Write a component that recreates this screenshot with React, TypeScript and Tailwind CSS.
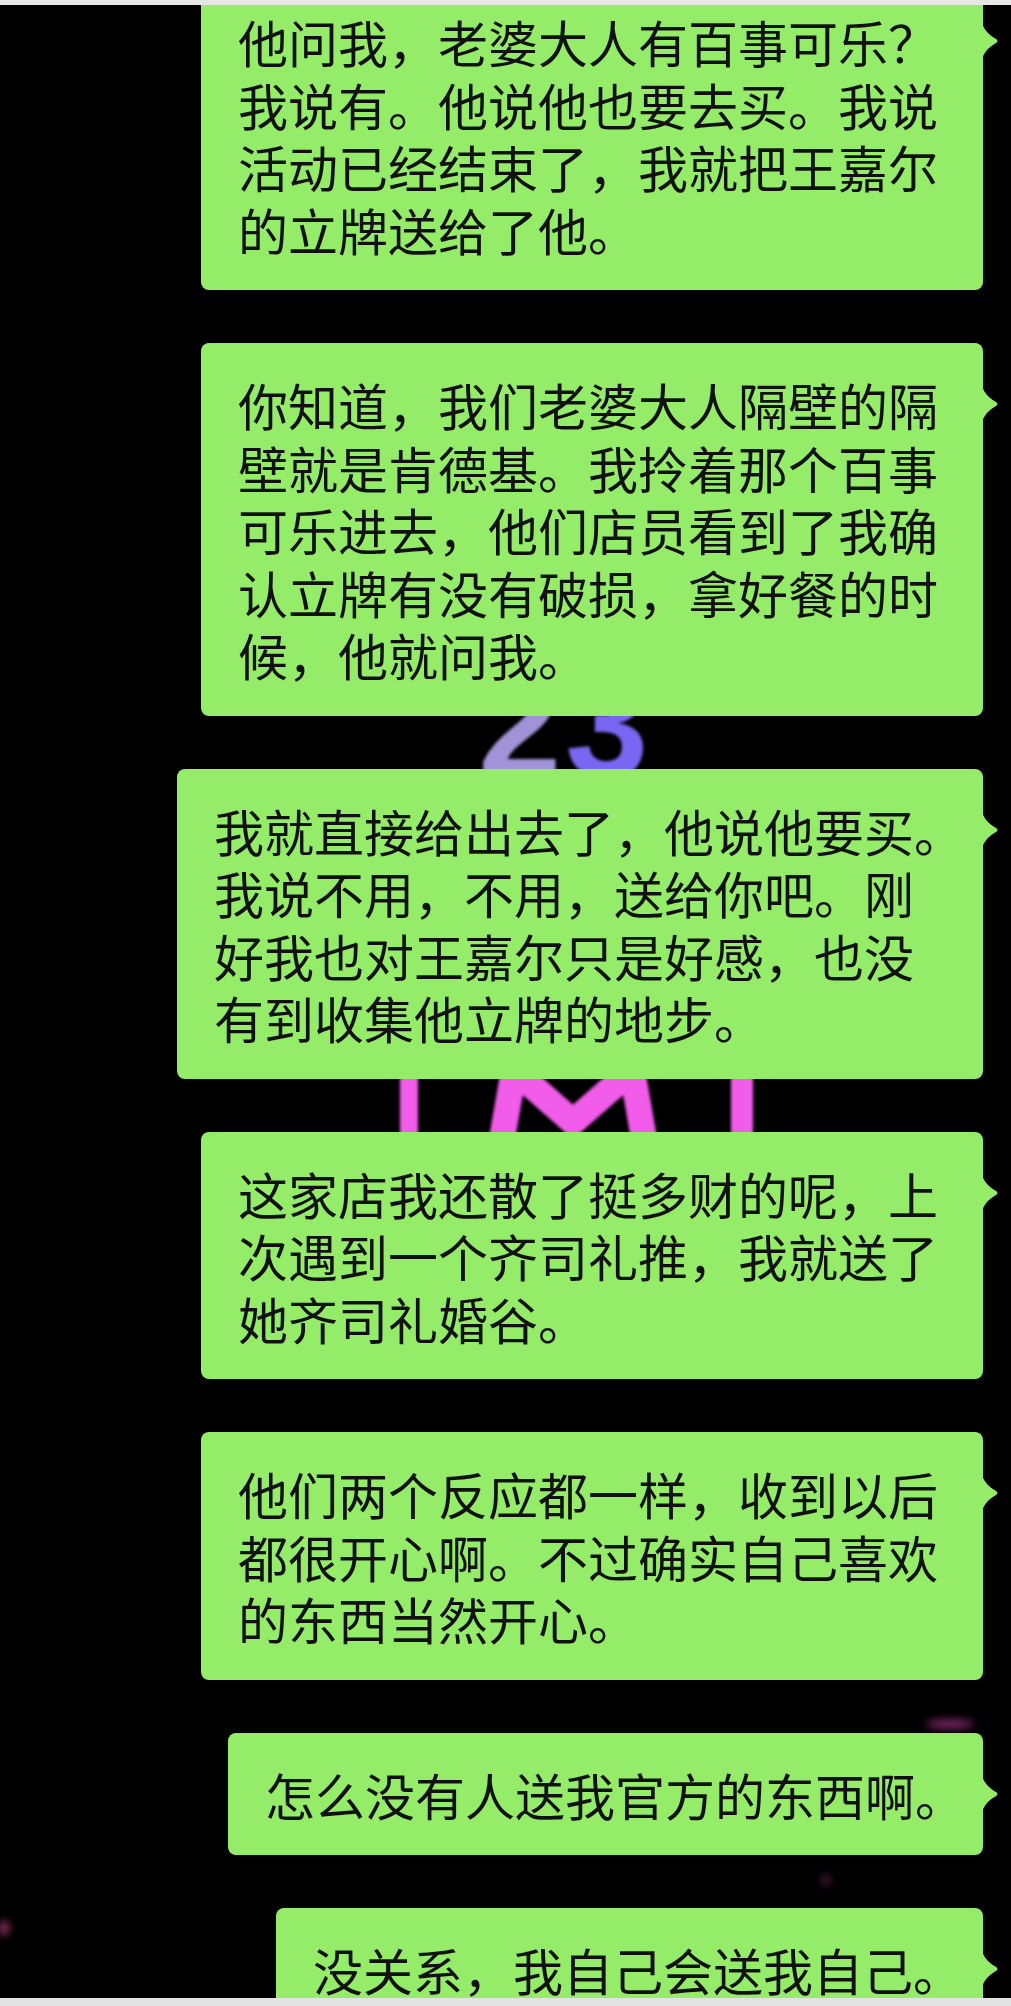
import React from "react";

const messages: { w: string; lines: string[] }[] = [
  {
    w: "w-[782px]",
    lines: [
      "他问我，老婆大人有百事可乐？",
      "我说有。他说他也要去买。我说",
      "活动已经结束了，我就把王嘉尔",
      "的立牌送给了他。",
    ],
  },
  {
    w: "w-[782px]",
    lines: [
      "你知道，我们老婆大人隔壁的隔",
      "壁就是肯德基。我拎着那个百事",
      "可乐进去，他们店员看到了我确",
      "认立牌有没有破损，拿好餐的时",
      "候，他就问我。",
    ],
  },
  {
    w: "w-[806px]",
    lines: [
      "我就直接给出去了，他说他要买。",
      "我说不用，不用，送给你吧。刚",
      "好我也对王嘉尔只是好感，也没",
      "有到收集他立牌的地步。",
    ],
  },
  {
    w: "w-[782px]",
    lines: [
      "这家店我还散了挺多财的呢，上",
      "次遇到一个齐司礼推，我就送了",
      "她齐司礼婚谷。",
    ],
  },
  {
    w: "w-[782px]",
    lines: [
      "他们两个反应都一样，收到以后",
      "都很开心啊。不过确实自己喜欢",
      "的东西当然开心。",
    ],
  },
  { w: "w-[755px]", lines: ["怎么没有人送我官方的东西啊。"] },
  { w: "w-[707px]", lines: ["没关系，我自己会送我自己。"] },
];

function Bubble({ w, lines }: { w: string; lines: string[] }) {
  return (
    <div className="flex justify-end pr-[28px]">
      <div
        className={`relative ${w} rounded-lg bg-[#95ec69] py-[30px] pl-[37px] text-[50px] leading-[62.5px] text-[#111]`}
      >
        {lines.map((l, i) => (
          <p key={i} className="whitespace-nowrap">
            {l}
          </p>
        ))}
        {/* little tail on the right */}
        <svg
          className="absolute -right-[16px] top-[43px]"
          width="17"
          height="36"
          viewBox="0 0 17 36"
        >
          <path
            d="M0 0 C3 9 9 13 14 16 Q17 18 14 20 C9 23 3 27 0 36 Z"
            fill="#95ec69"
          />
        </svg>
      </div>
    </div>
  );
}

export default function App() {
  return (
    <div
      className="relative flex h-[2006px] w-[1011px] flex-col overflow-hidden bg-black"
      style={{ fontFamily: '"Noto Sans CJK SC", "Noto Sans", sans-serif' }}
    >
      {/* photo behind the chat */}
      <svg
        className="absolute left-0 top-0"
        width="1011"
        height="2006"
        viewBox="0 0 1011 2006"
      >
        <defs>
          <filter id="soft">
            <feGaussianBlur stdDeviation="1.5" />
          </filter>
          <filter id="glow">
            <feGaussianBlur stdDeviation="4" />
          </filter>
        </defs>
        <g filter="url(#soft)">
          <text
            x="478"
            y="776"
            fontSize="150"
            fontWeight="700"
            fontFamily="Liberation Sans, sans-serif"
            fill="#a193d8"
          >
            2
          </text>
          <text
            x="565"
            y="776"
            fontSize="150"
            fontWeight="700"
            fontFamily="Liberation Sans, sans-serif"
            fill="#7a66f2"
          >
            3
          </text>
          <rect x="400" y="1060" width="18" height="90" fill="#f25cea" />
          <rect x="731" y="1060" width="22" height="90" fill="#f25cea" />
          <polyline
            points="500,1150 514,1070 573,1122 632,1070 646,1150"
            fill="none"
            stroke="#f25cea"
            strokeWidth="26"
          />
        </g>
        <g filter="url(#glow)">
          <ellipse cx="950" cy="1724" rx="24" ry="4" fill="#8a2b72" />
          <ellipse cx="4" cy="1928" rx="5" ry="7" fill="#a0306a" />
          <ellipse cx="826" cy="1880" rx="3" ry="5" fill="#7a2a66" />
        </g>
      </svg>

      <div className="relative z-10 h-[5px] shrink-0 bg-[#e6e6e6]" />

      <main className="relative z-10 flex min-h-0 flex-1 flex-col gap-[53px] overflow-hidden">
        <div className="-mt-[25px] flex flex-col gap-[53px]">
          {messages.map((m, i) => (
            <Bubble key={i} w={m.w} lines={m.lines} />
          ))}
        </div>
      </main>

      <div className="relative z-10 h-[8px] shrink-0 bg-[#e3e3e3]" />
    </div>
  );
}
